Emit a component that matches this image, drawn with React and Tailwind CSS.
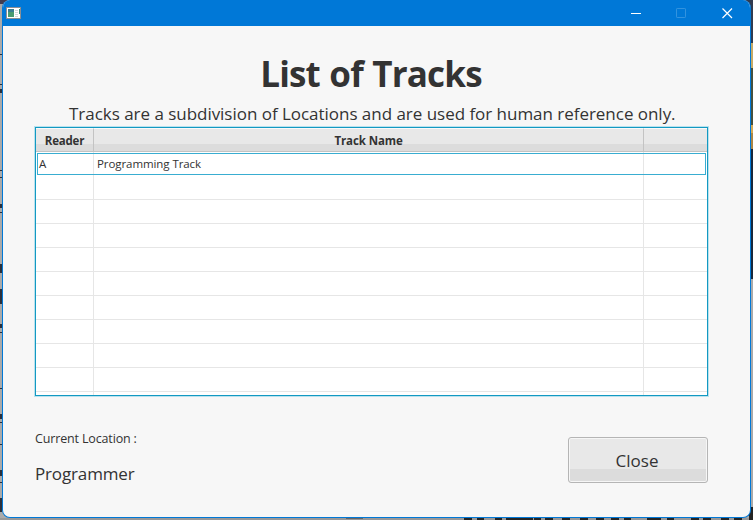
import React from "react";

const ROWS = [["A", "Programming Track"], [], [], [], [], [], [], [], [], []];

const LEFT_MARKS = [
  [54, 1], [84, 1], [89, 4], [170, 1], [177, 1], [204, 4], [212, 1],
  [264, 9], [289, 15], [324, 4], [332, 1], [388, 1], [414, 5], [422, 1],
  [444, 1], [470, 6], [482, 1], [498, 14],
];

// Tops of the large heading letters that show under the window: left edge and width.
const HEADING_TOPS = [
  [464, 8], [477, 7], [495, 7], [506, 27], [534, 7], [545, 8], [562, 8],
  [580, 8], [596, 8], [611, 8], [624, 7], [647, 14], [667, 7], [691, 8],
  [703, 8], [721, 8], [734, 8],
];

function Backdrop() {
  return (
    <div className="absolute inset-0 bg-[#aaa]">
      {LEFT_MARKS.map(([y, h]) => (
        <div key={y} className="absolute left-0 w-[2px] bg-[#2b303c]" style={{ top: y, height: h }} />
      ))}
      <div className="absolute left-0 top-0 h-1 w-2 bg-[#403c50]" />
      <div className="absolute right-0 top-0 flex w-3 flex-col">
        <div className="h-[43px] bg-[#303b50]" />
        <div className="h-[25px] bg-[#c5aa66]" />
        <div className="h-[57px] bg-[#45513f]" />
        <div className="h-[8px] bg-[#d4aa55]" />
        <div className="h-[16px] bg-[#a98545]" />
        <div className="h-[130px] bg-[#18283c]" />
      </div>
      <div className="absolute bottom-0 left-0 flex h-[2px] w-full bg-[#999]">
        <div className="ml-[346px] h-px w-[17px] bg-[#666]" />
      </div>
      {HEADING_TOPS.map(([x, w]) => (
        <div key={x} className="absolute bottom-0 h-[3px] bg-[#242424]" style={{ left: x, width: w }} />
      ))}
      <div className="absolute bottom-0 right-0 h-[13px] w-[4px] bg-[#242424]" />
    </div>
  );
}

function TitleBar() {
  return (
    <div className="flex h-[26px] shrink-0 items-start justify-between bg-[#0078d7]">
      <svg className="ml-[3px] mt-[7px]" width="15" height="12" viewBox="0 0 15 12" shapeRendering="crispEdges">
        <path d="M0 0h15v12H0z" fill="#8b8f94" />
        <path d="M1 1h13v10H1z" fill="#fff" />
        <path d="M2 2h6v8H2z" fill="#4a9b70" />
        <path d="M2 2h6v3H2z" fill="#397d91" />
        <path d="M9 3h3v1H9zM9 5h3v1H9zM9 7h3v1H9zM9 9h3v1H9z" fill="#d4d7dc" />
        <path d="M13 2h1v5h-1z" fill="#398b79" />
      </svg>
      <svg className="mr-[16px] mt-[7px]" width="103" height="12" viewBox="0 0 103 12" fill="none">
        <path d="M0 6.5h10" stroke="#fff" />
        <rect x="45.5" y="1.5" width="9" height="9" rx=".6" stroke="#3293df" />
        <path d="M91.5 1.5l9.5 9.5M101 1.5l-9.5 9.5" stroke="#fff" strokeWidth="1.2" />
      </svg>
    </div>
  );
}

function HeaderCell({ children, last }) {
  return (
    <div className={"flex items-center justify-center border-t border-t-[#fafafa] bg-[linear-gradient(#e8e8e8_0_66%,#dcdcdc_66%)] pt-px " + (last ? "" : "border-r border-r-[#c3c3c3]")}>
      {children}
    </div>
  );
}

function TrackTable() {
  return (
    <div className="ml-[32px] flex h-[269px] w-[673px] flex-col overflow-hidden border border-[#1399c2] bg-white shadow-[0_0_0_1px_#b9e2ee]">
      <div className="grid h-[24px] shrink-0 grid-cols-[58px_550px_1fr] border-b border-[#c3c3c3] text-[11.5px] font-bold">
        <HeaderCell><span className="tracking-[-0.2px]">Reader</span></HeaderCell>
        <HeaderCell><span className="tracking-[-0.1px]">Track Name</span></HeaderCell>
        <HeaderCell last />
      </div>
      {ROWS.map(([reader, name], i) => (
        <div key={i} className={"relative grid h-[24px] shrink-0 grid-cols-[58px_550px_1fr] text-[11.5px] leading-[24px] " + (i ? "border-b border-[#e6e6e6]" : "")}>
          <div className="border-r border-[#e6e6e6] pl-[3px]">{reader}</div>
          <div className="border-r border-[#e6e6e6] pl-[3px] tracking-[-0.08px]">{name}</div>
          <div />
          {i === 0 && <div className="absolute bottom-px left-px right-px top-px border border-[#39add1]" />}
        </div>
      ))}
      <div className="grid grow grid-cols-[58px_550px_1fr]">
        <div className="border-r border-[#e6e6e6]" />
        <div className="border-r border-[#e6e6e6]" />
      </div>
    </div>
  );
}

export default function App() {
  return (
    <div className="relative h-[520px] w-[753px] overflow-hidden font-['Open_Sans','Noto_Sans',sans-serif] text-[#333]">
      <Backdrop />
      <main className="relative ml-[2px] flex h-[518px] w-[749px] flex-col overflow-hidden rounded-[8px] border border-t-0 border-[#0078d7] bg-[#f7f7f7]">
        <TitleBar />
        <h1 className="mt-[24px] flex h-[48px] items-center justify-center whitespace-nowrap pr-[11px] text-[35px] font-bold leading-[48px] tracking-[-0.8px] [word-spacing:1px]">List of Tracks</h1>
        <p className="mt-[3px] h-[26px] whitespace-nowrap pl-[66px] text-[17px] leading-[26px] tracking-[-0.03px]">
          Tracks are a subdivision of Locations and are used for human reference only.
        </p>
        <TrackTable />
        <div className="flex justify-between pl-[32px] pr-[42px] pt-[31px]">
          <div className="pt-[2px]">
            <div className="h-[20px] text-[12.5px] leading-[20px] tracking-[-0.15px]">Current Location :</div>
            <div className="mt-[12px] h-[26px] text-[17px] leading-[26px] tracking-[-0.15px]">Programmer</div>
          </div>
          <button className="mt-[10px] h-[46px] w-[140px] rounded-[3px] border border-[#b5b5b5] bg-[linear-gradient(#e8e8e8_0_70%,#dcdcdc_70%)] pr-[2px] pt-px text-[17px] shadow-[inset_0_0_0_1px_#f6f6f6]">Close</button>
        </div>
      </main>
    </div>
  );
}
